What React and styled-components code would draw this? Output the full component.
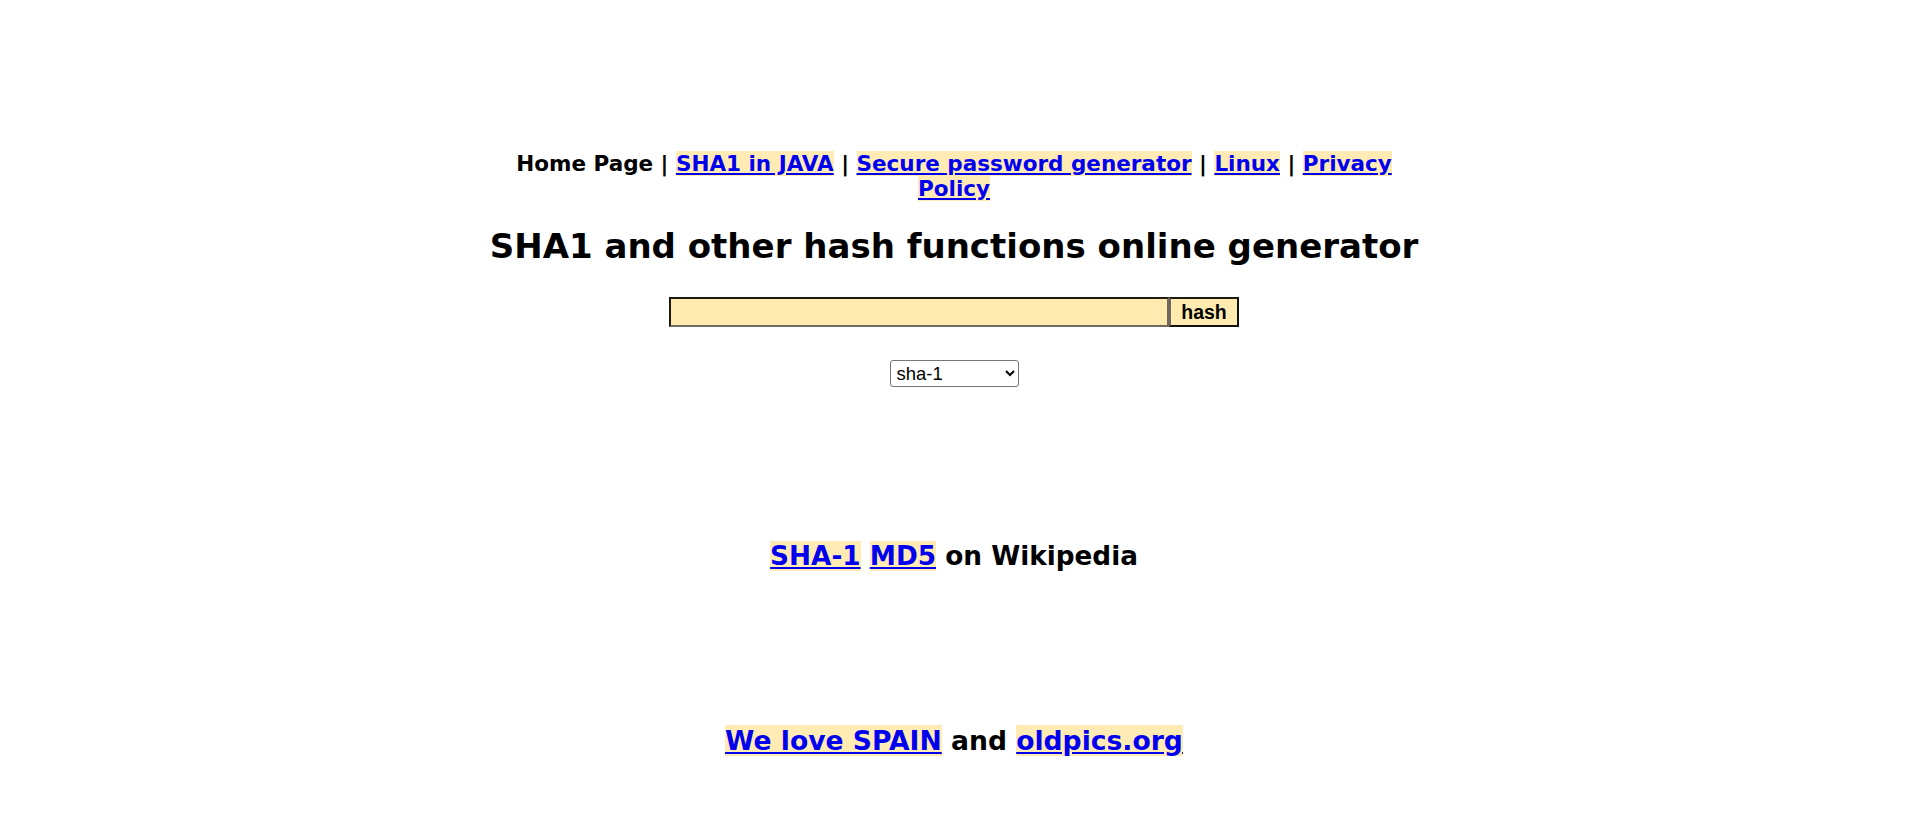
import React from "react";
import styled, { createGlobalStyle } from "styled-components";

const Global = createGlobalStyle`
  html, body { margin: 0; padding: 0; background: #ffffff; }
  body { font-family: "DejaVu Sans", Verdana, sans-serif; color: #000; }
`;

const Page = styled.div`
  display: flex;
  flex-direction: column;
  align-items: center;
  padding-top: 151px;
  text-align: center;
`;

const Nav = styled.nav`
  width: 900px;
  font-size: 21.5px;
  line-height: 25px;
  font-weight: bold;
`;

const Link = styled.a`
  color: #0000ee;
  background: #ffebb3;
  text-decoration: underline;
  font-weight: bold;
`;

const Title = styled.h1`
  margin: 25px 0 0;
  font-size: 34px;
  line-height: 40px;
  font-weight: bold;
`;

const Form = styled.form`
  display: flex;
  margin: 31px 0 0;
`;

const Input = styled.input`
  box-sizing: border-box;
  width: 500px;
  height: 30px;
  margin: 0;
  background: #ffebaf;
  border-style: solid;
  border-width: 2px;
  border-color: #1e1a12 #6e6a62 #6e6a62 #1e1a12;
  outline: none;
`;

const Button = styled.button`
  box-sizing: border-box;
  width: 70px;
  height: 30px;
  margin: 0;
  padding: 0;
  background: #ffebaf;
  border-style: solid;
  border-width: 2px;
  border-color: #1e1a12 #111 #111 #6e665a;
  font-family: "Liberation Sans", Arial, sans-serif;
  font-weight: bold;
  font-size: 19.5px;
  color: #000;
`;

const Select = styled.select`
  box-sizing: border-box;
  margin-top: 33px;
  width: 129px;
  height: 27px;
  font-family: "Liberation Sans", Arial, sans-serif;
  font-size: 18.5px;
  border: 1px solid #767676;
  border-radius: 3px;
  background: #fff;
  color: #000;
  padding: 0 2px;
`;

const BigLine = styled.p`
  margin: ${(p) => p.$top}px 0 0;
  font-size: ${(p) => p.$size}px;
  line-height: 32px;
  font-weight: bold;
`;

export default function App() {
  return (
    <>
      <Global />
      <Page>
        <Nav>
          Home Page | <Link href="#">SHA1 in JAVA</Link> |{" "}
          <Link href="#">Secure password generator</Link> |{" "}
          <Link href="#">Linux</Link> | <Link href="#">Privacy Policy</Link>
        </Nav>
        <Title>SHA1 and other hash functions online generator</Title>
        <Form onSubmit={(e) => e.preventDefault()}>
          <Input type="text" />
          <Button type="submit">hash</Button>
        </Form>
        <Select defaultValue="sha-1">
          <option value="sha-1">sha-1</option>
          <option value="md5">md5</option>
          <option value="sha-256">sha-256</option>
        </Select>
        <BigLine $top={153} $size={26.3}>
          <Link href="#">SHA-1</Link> <Link href="#">MD5</Link> on Wikipedia
        </BigLine>
        <BigLine $top={153} $size={26.6}>
          <Link href="#">We love SPAIN</Link> and <Link href="#">oldpics.org</Link>
        </BigLine>
      </Page>
    </>
  );
}
